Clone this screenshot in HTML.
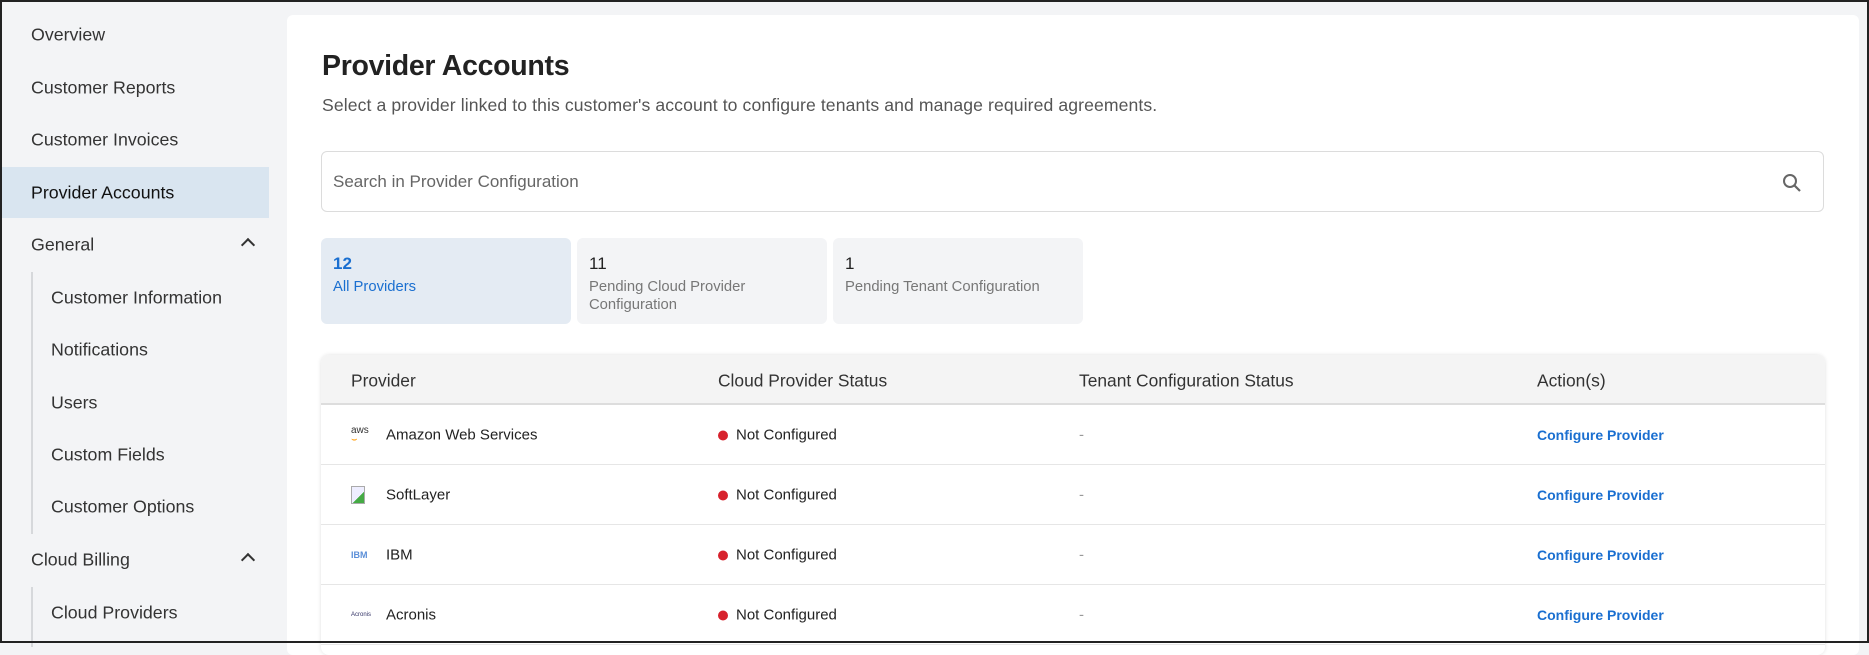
<!DOCTYPE html>
<html><head><meta charset="utf-8"><style>
*{box-sizing:border-box;margin:0;padding:0}
body{width:1869px;height:643px;overflow:hidden;background:#f3f4f6;font-family:"Liberation Sans",Arial,sans-serif;color:#222;position:relative}
.frame{position:absolute;inset:0;border:2px solid #222;pointer-events:none;z-index:10}
.side{position:absolute;left:0;top:0;width:269px;height:643px}
.it{position:absolute;left:31px;font-size:17.8px;color:#333;transform:translateY(-50%)}
.sub{left:51px}
.hl{position:absolute;left:2px;top:167px;width:267px;height:51px;background:#d9e5f0}
.line{position:absolute;left:31px;width:2px;background:#d6d8db}
.chev{position:absolute;left:243px;width:10px;height:10px;border-left:2px solid #333;border-top:2px solid #333;transform:rotate(45deg)}
.card{position:absolute;left:287px;top:15px;width:1572px;height:640px;background:#fff;border-radius:6px}
h1{position:absolute;left:322px;top:50px;font-size:28.5px;font-weight:bold;color:#222;letter-spacing:-0.3px}
.subt{position:absolute;left:322px;top:95px;font-size:17.6px;color:#555;letter-spacing:0.1px}
.search{position:absolute;left:321px;top:151px;width:1503px;height:61px;border:1px solid #dcdcdc;border-radius:6px}
.search span{position:absolute;left:11px;top:20px;font-size:17px;color:#666}
.tab{position:absolute;top:238px;width:250px;height:86px;background:#f3f4f6;border-radius:6px}
.tab .n{position:absolute;left:12px;top:16px;font-size:17px;color:#222}
.tab .l{position:absolute;left:12px;top:40px;font-size:14.8px;color:#777;line-height:18px}
.tab.a{background:#e4ebf3}.tab.a .n{color:#1a6fd0;font-weight:bold}.tab.a .l{color:#1a6fd0}
.tbl{position:absolute;left:321px;top:355px;width:1504px;height:300px;border-radius:8px;box-shadow:0 0 4px rgba(0,0,0,.12);overflow:hidden}
.th{position:absolute;left:0;top:0;width:100%;height:50px;background:#f4f4f4;border-bottom:2px solid #ddd}
.c{position:absolute;transform:translateY(-50%);white-space:nowrap}
.thc{font-size:17.4px;color:#333;top:26px}
.row{position:absolute;left:0;width:100%;height:60px;border-bottom:1px solid #e6e6e6}
.row .c{top:30px;font-size:15px}
.dot{display:inline-block;width:10px;height:10px;border-radius:50%;background:#d7222d;margin-right:8px;vertical-align:-1px}
.act{color:#1a6fd0;font-weight:bold;font-size:14px!important}
.dash{color:#999}
</style></head><body>
<div class="side">
<div class="it" style="top:35px">Overview</div>
<div class="it" style="top:88px">Customer Reports</div>
<div class="it" style="top:140px">Customer Invoices</div>
<div class="hl"></div>
<div class="it" style="top:193px;color:#111">Provider Accounts</div>
<div class="it" style="top:245px">General</div><div class="chev" style="top:240px"></div>
<div class="line" style="top:272px;height:262px"></div>
<div class="it sub" style="top:298px">Customer Information</div>
<div class="it sub" style="top:350px">Notifications</div>
<div class="it sub" style="top:403px">Users</div>
<div class="it sub" style="top:455px">Custom Fields</div>
<div class="it sub" style="top:507px">Customer Options</div>
<div class="it" style="top:560px">Cloud Billing</div><div class="chev" style="top:555px"></div>
<div class="line" style="top:587px;height:60px"></div>
<div class="it sub" style="top:613px">Cloud Providers</div>
</div>
<div class="card"></div>
<h1>Provider Accounts</h1>
<div class="subt">Select a provider linked to this customer's account to configure tenants and manage required agreements.</div>
<div class="search"><span>Search in Provider Configuration</span>
<svg style="position:absolute;right:21px;top:21px" width="20" height="20" viewBox="0 0 20 20"><circle cx="8" cy="8" r="6" fill="none" stroke="#666" stroke-width="2"/><path d="M12.5 12.5L18 18" stroke="#666" stroke-width="2.2"/></svg></div>
<div class="tab a" style="left:321px"><div class="n">12</div><div class="l">All Providers</div></div>
<div class="tab" style="left:577px"><div class="n">11</div><div class="l">Pending Cloud Provider<br>Configuration</div></div>
<div class="tab" style="left:833px"><div class="n">1</div><div class="l">Pending Tenant Configuration</div></div>
<div class="tbl">
<div class="th">
<div class="c thc" style="left:30px">Provider</div>
<div class="c thc" style="left:397px">Cloud Provider Status</div>
<div class="c thc" style="left:758px">Tenant Configuration Status</div>
<div class="c thc" style="left:1216px">Action(s)</div>
</div>
<div class="row" style="top:50px">
<div class="c" style="left:30px;font-size:10px;color:#333;line-height:9px">aws<br><span style="color:#f90">⌣</span></div>
<div class="c" style="left:65px">Amazon Web Services</div>
<div class="c" style="left:397px"><span class="dot"></span>Not Configured</div>
<div class="c dash" style="left:758px">-</div>
<div class="c act" style="left:1216px">Configure Provider</div></div>
<div class="row" style="top:110px">
<div class="c" style="left:30px;width:14px;height:18px;border:1px solid #aaa;background:linear-gradient(135deg,#eef 60%,#4a4 60%)"></div>
<div class="c" style="left:65px">SoftLayer</div>
<div class="c" style="left:397px"><span class="dot"></span>Not Configured</div>
<div class="c dash" style="left:758px">-</div>
<div class="c act" style="left:1216px">Configure Provider</div></div>
<div class="row" style="top:170px">
<div class="c" style="left:30px;font-size:9px;color:#5b8fd8;font-weight:bold">IBM</div>
<div class="c" style="left:65px">IBM</div>
<div class="c" style="left:397px"><span class="dot"></span>Not Configured</div>
<div class="c dash" style="left:758px">-</div>
<div class="c act" style="left:1216px">Configure Provider</div></div>
<div class="row" style="top:230px">
<div class="c" style="left:30px;font-size:6px;color:#336">Acronis</div>
<div class="c" style="left:65px">Acronis</div>
<div class="c" style="left:397px"><span class="dot"></span>Not Configured</div>
<div class="c dash" style="left:758px">-</div>
<div class="c act" style="left:1216px">Configure Provider</div></div>
</div>
<div class="frame"></div>
</body></html>
